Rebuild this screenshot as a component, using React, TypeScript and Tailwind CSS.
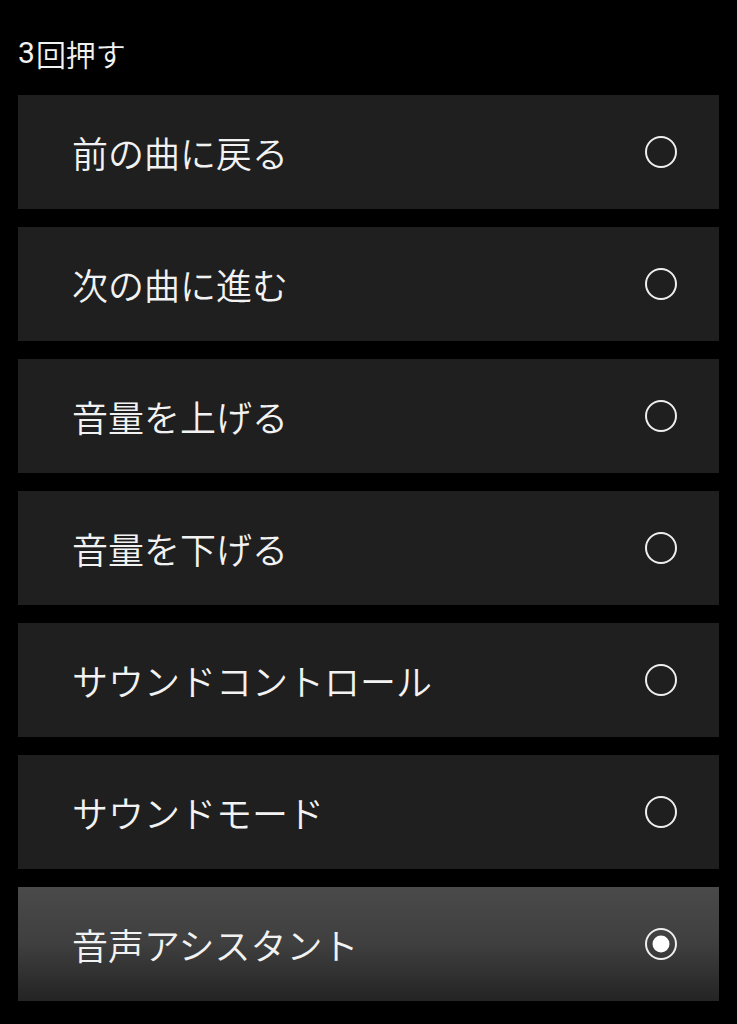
import React from "react";

const items = [
  "前の曲に戻る",
  "次の曲に進む",
  "音量を上げる",
  "音量を下げる",
  "サウンドコントロール",
  "サウンドモード",
  "音声アシスタント",
];

const selectedIndex = 6;

function Radio({ checked }: { checked: boolean }) {
  return (
    <svg width="34" height="34" viewBox="0 0 34 34">
      <circle cx="17" cy="17" r="15" fill="none" stroke="#eeeeee" strokeWidth="2" />
      {checked && <circle cx="17" cy="17" r="8.5" fill="#ffffff" />}
    </svg>
  );
}

export default function App() {
  return (
    <div
      className="min-h-[1024px] w-[737px] bg-black pt-[33px]"
      style={{ fontFamily: '"Noto Sans CJK JP", "Noto Sans", sans-serif' }}
    >
      <div className="flex h-[40px] items-center pl-[18px] mb-[22px] text-[#f2f2f2]">
        <span className="font-[Roboto] text-[30px] leading-none font-normal mr-[1px]">3</span>
        <span className="text-[30px] leading-none font-[350]">回押す</span>
      </div>
      <div className="flex flex-col gap-[18px] px-[18px]">
        {items.map((label, i) => {
          const sel = i === selectedIndex;
          return (
            <div
              key={label}
              className={
                sel
                  ? "flex h-[114px] items-center justify-between pl-[54px] pr-[41px] bg-gradient-to-b from-[#4a4a4a] via-[#3f3f3f] to-[#242424]"
                  : "flex h-[114px] items-center justify-between pl-[54px] pr-[41px] bg-[#1f1f1f]"
              }
            >
              <span className="text-[36px] leading-none font-[350] text-[#f2f2f2]">{label}</span>
              <Radio checked={sel} />
            </div>
          );
        })}
      </div>
    </div>
  );
}
